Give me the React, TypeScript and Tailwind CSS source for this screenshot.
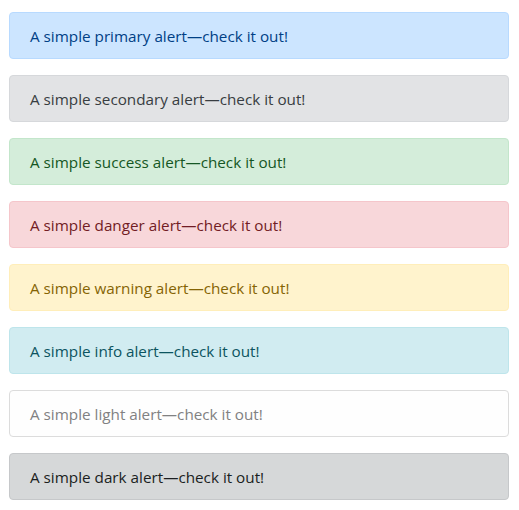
const alerts = [
  { name: "primary", cls: "bg-[#cce5ff] border-[#b8daff] text-[#004085]" },
  { name: "secondary", cls: "bg-[#e2e3e5] border-[#d6d8db] text-[#383d41]" },
  { name: "success", cls: "bg-[#d4edda] border-[#c3e6cb] text-[#155724]" },
  { name: "danger", cls: "bg-[#f8d7da] border-[#f5c6cb] text-[#721c24]" },
  { name: "warning", cls: "bg-[#fff3cd] border-[#ffeeba] text-[#856404]" },
  { name: "info", cls: "bg-[#d1ecf1] border-[#bee5eb] text-[#0c5460]" },
  { name: "light", cls: "bg-[#fefefe] border-[#dcdcdc] text-[#818182]" },
  { name: "dark", cls: "bg-[#d6d8d9] border-[#c6c8ca] text-[#1b1e21]" },
]

export default function App() {
  return (
    <div className="min-h-screen bg-white pt-[12px] pl-[9px] font-['Open_Sans',sans-serif]">
      <div className="flex w-[500px] flex-col gap-4">
        {alerts.map((a) => (
          <div
            key={a.name}
            role="alert"
            className={`rounded-[4px] border px-5 pt-[12px] pb-[10px] text-[15.25px] leading-[23px] ${a.cls}`}
          >
            A simple {a.name} alert—check it out!
          </div>
        ))}
      </div>
    </div>
  )
}
